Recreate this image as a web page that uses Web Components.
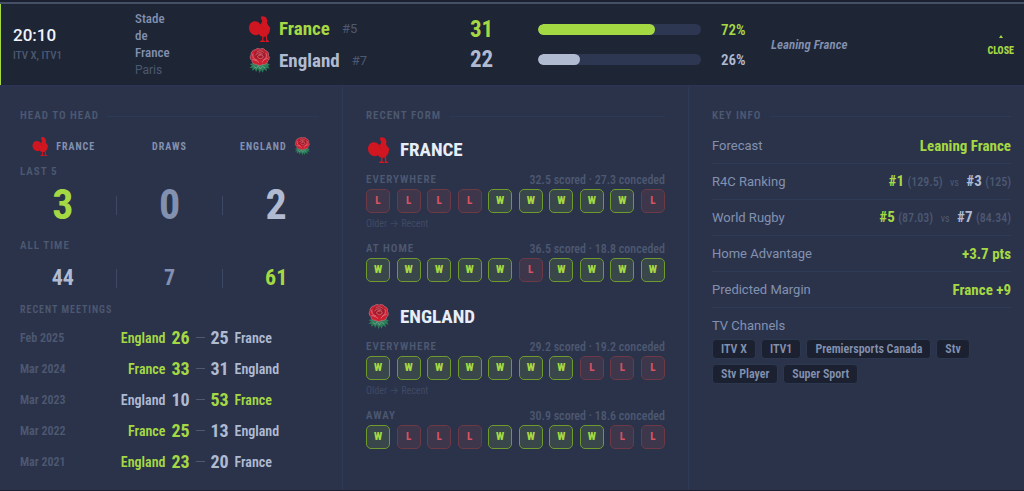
<!DOCTYPE html>
<html lang="en">
<head>
<meta charset="utf-8">
<meta name="viewport" content="width=device-width, initial-scale=1">
<title>France v England</title>
<style>
	:root {
		--cond: "Roboto Condensed", "Liberation Sans Narrow", "Roboto", sans-serif;
		--green: #a5d944;
		--light: #b0bbd2;
		--muted: #8391b0;
		--dim: #4d5971;
		--panel: #2b334b;
		--dark: #1e2535;
		--line: #2d3a55;
	}
	body {
		margin: 0;
		background: var(--panel);
		font-family: "Roboto", sans-serif;
		color: var(--light);
	}
</style>
</head>
<body>
<match-card></match-card>

<script>
const FRANCE = "France";
const ENGLAND = "England";

function define(name, css, html) {
	customElements.define(name, class extends HTMLElement {
		constructor() {
			super();
			this.attachShadow({ mode: "open" });
			this.shadowRoot.innerHTML = `<style>* { box-sizing: border-box; }${css}</style>${typeof html === "function" ? html(this) : html}`;
		}
	});
}

const ROOSTER = `
	<g fill="#d01620">
		<path d="M35 2c4-2 9-2 13 0 4 2 6 6 6 10l3 3-3 2c0 5 2 8 5 12l5 7-2 8c0 5-3 9-6 12l-7 6H40c-5-1-8-4-10-7-5 3-11 3-17 1C5 53 0 45 0 36c0-12 8-20 18-20 7 0 12 3 16 9 5-4 6-9 5-14l-4-1 2-4z"/>
		<path d="M40 58h4l-1 15 5 2v3H33v-3l6-2zM50 57h4l1 15 5 3v3H49l2-6z"/>
	</g>
	<path d="M34 26c1 6 5 10 11 11" fill="none" stroke="#b9121c" stroke-width="1"/>`;

const ROSE = `
	<g fill="#2c7d5a">
		<path d="M11 46 2 48l7 5-8 7 10-1-2 9 9-5 3 9 6-10 5 14 4-11 5 9 4-10 9 6-2-11 10 3-5-9 6-3-9-5z"/>
	</g>
	<path d="M14 54l8 7 6-8 6 10 6-9 8 6" fill="none" stroke="#7fae94" stroke-width="2"/>
	<path d="M19 5c5-5 12-3 15-2 6-3 13-1 16 5 7 1 10 8 8 14 5 6 3 14-2 17-1 8-8 12-15 10-6 5-14 4-18 0-8 1-14-4-14-11-6-4-7-12-3-17-1-8 5-15 13-16z" fill="#ce1f30" stroke="#b9808c" stroke-width="2"/>
	<path d="M20 10c8-7 22-6 28 2 5 7 3 17-5 21-9 5-22 2-26-6-3-6-2-13 3-17z" fill="#a31a2a"/>
	<g fill="none" stroke="#df8792" stroke-width="2">
		<path d="M23 12c7-6 18-4 22 2M19 22c5-8 15-10 22-4M26 25c3-6 12-7 16-1 2 4-2 8-8 8-5 0-8-3-8-7z"/>
		<path d="M12 17c-3 10 3 17 12 19M50 15c5 9 1 17-7 21M10 34c8 3 16 4 20 10M56 31c-7 2-14 5-17 12M33 19v5"/>
	</g>`;

// crest: emblem of the side named in its "team" attribute, sized by --crest
define("team-crest", `
	:host { display: block; flex: none; width: var(--crest, 24px); height: var(--crest, 24px); }
	svg { display: block; width: 100%; height: 100%; }
`, el => `<svg viewBox="0 0 66 78" role="img" aria-label="${el.getAttribute("team")}">${el.getAttribute("team") === FRANCE ? ROOSTER : ROSE}</svg>`);

define("match-time", `
	:host { display: block; }
	time { display: block; font-size: 17px; line-height: 22px; font-weight: 500; color: #f0f4fb; }
	small { display: block; font: 500 11px/20px var(--cond); color: var(--dim); }
`, `<time><slot></slot></time><small><slot name="tv"></slot></small>`);

define("match-venue", `
	:host { display: block; width: 40px; font-size: 12px; line-height: 19px; }
	b { display: block; font: 500 13px/17px var(--cond); color: var(--muted); }
	span { color: var(--dim); }
`, `<b><slot></slot></b><span><slot name="city"></slot></span>`);

define("team-line", `
	:host { --crest: 26px; display: flex; align-items: center; gap: 6px; height: 32px; color: var(--light); }
	:host([win]) { color: var(--green); }
	b { font: 700 19px/24px var(--cond); }
	span { font-size: 13px; color: var(--dim); margin-left: 6px; }
`, el => `<team-crest team="${el.getAttribute("team")}"></team-crest><b>${el.getAttribute("team")}</b><span><slot></slot></span>`);

define("win-chance", `
	:host { display: grid; grid-template-columns: 48px 1fr 26px; gap: 20px; align-items: center; height: 30px; color: var(--light); font-family: var(--cond); }
	:host([win]) { color: var(--green); }
	b { font-size: 23px; font-weight: 700; }
	i { display: block; height: 11px; border-radius: 6px; background: #2e3752; overflow: hidden; }
	i::before { content: ""; display: block; height: 100%; width: var(--value); border-radius: 6px; background: currentColor; }
	span { font-size: 15px; font-weight: 600; }
`, el => `<b><slot></slot></b><i style="--value: ${el.getAttribute("chance")}"></i><span>${el.getAttribute("chance")}</span>`);

define("match-header", `
	:host { display: block; border-top: 2px solid #454f66; background: var(--dark); border-bottom: 2px solid #2c3452; }
	header { display: grid; grid-template-columns: 110px 100px 211px minmax(200px, 277px) 1fr auto; gap: 12px; align-items: center; height: 81px; padding: 0 10px 0 12px; border-left: 1px solid var(--green); }
	em { padding-left: 12px; font: italic 600 13px/18px var(--cond); color: var(--muted); }
	button { display: grid; justify-items: center; border: 0; padding: 4px 0 0; background: none; font: 800 10px/14px var(--cond); color: var(--green); cursor: pointer; }
	svg { display: block; width: 4px; height: 3px; margin-bottom: 6px; fill: currentColor; }
`, `
	<header>
		<match-time>20:10<span slot="tv">ITV X, ITV1</span></match-time>
		<match-venue>Stade de France<span slot="city">Paris</span></match-venue>
		<div>
			<team-line team="France" win>#5</team-line>
			<team-line team="England">#7</team-line>
		</div>
		<div>
			<win-chance chance="72%" win>31</win-chance>
			<win-chance chance="26%">22</win-chance>
		</div>
		<em>Leaning France</em>
		<button type="button"><svg viewBox="0 0 4 3"><path d="M2 0l2 3H0z"/></svg>CLOSE</button>
	</header>`);

define("info-panel", `
	:host { display: block; min-width: 0; }
	h2 { display: flex; align-items: center; gap: 8px; margin: 0 0 4px; font: 600 11px/16px var(--cond); letter-spacing: 1px; color: var(--dim); }
	h2::after { content: ""; flex: 1; height: 1px; background: var(--line); }
`, `<h2><slot name="title"></slot></h2><slot></slot>`);

define("score-split", `
	:host { display: grid; grid-template-columns: 1fr 1px 1fr 1px 1fr; column-gap: 10px; align-items: center; justify-items: center; height: 50px; margin-bottom: 8px; font: 700 42px/48px var(--cond); }
	:host([small]) { height: 48px; margin: 0; font-size: 22px; line-height: 28px; }
	i { width: 1px; height: 19px; background: #3d4964; }
	.draws { color: var(--muted); }
	::slotted([slot]) { color: var(--light); }
	::slotted(.win) { color: var(--green); }
`, `<slot name="home"></slot><i></i><span class="draws"><slot></slot></span><i></i><slot name="away"></slot>`);

const MEETINGS = [
	["Feb 2025", ENGLAND, 26, 25, FRANCE],
	["Mar 2024", FRANCE, 33, 31, ENGLAND],
	["Mar 2023", ENGLAND, 10, 53, FRANCE],
	["Mar 2022", FRANCE, 25, 13, ENGLAND],
	["Mar 2021", ENGLAND, 23, 20, FRANCE],
];

define("recent-meetings", `
	:host { display: block; font-family: var(--cond); margin-top: 4px; }
	ul { list-style: none; margin: 0; padding: 0; }
	li { display: grid; grid-template-columns: 55px 1fr 18px 9px 18px 1fr; column-gap: 6px; align-items: center; height: 31px; font-size: 14px; font-weight: 600; }
	time { font-size: 12px; color: var(--dim); }
	b { font-size: 18px; font-weight: 700; }
	.home { text-align: right; }
	.win { color: var(--green); }
	i { height: 1px; background: var(--dim); }
`, `<ul>${MEETINGS.map(([date, home, a, b, away]) => `
	<li><time>${date}</time><span class="home ${a > b ? "win" : ""}">${home}</span><b class="${a > b ? "win" : ""}">${a}</b><i></i><b class="${b > a ? "win" : ""}">${b}</b><span class="${b > a ? "win" : ""}">${away}</span></li>`).join("")}</ul>`);

define("head-to-head", `
	:host { --crest: 19px; display: block; padding-top: 2px; }
	.teams { display: grid; grid-template-columns: 1fr 1fr 1fr; column-gap: 20px; height: 33px; margin-bottom: 1px; align-items: center; justify-items: center; font: 700 10px/16px var(--cond); letter-spacing: 1px; color: var(--muted); }
	.teams span { display: flex; align-items: center; gap: 6px; }
	h3 { margin: 0; font: 600 11px/16px var(--cond); letter-spacing: 1px; color: var(--dim); }
	.meetings { font-size: 10px; }
`, `
	<div class="teams">
		<span><team-crest team="France"></team-crest>FRANCE</span>
		<span>DRAWS</span>
		<span>ENGLAND<team-crest team="England"></team-crest></span>
	</div>
	<h3>LAST 5</h3>
	<score-split><span slot="home" class="win">3</span>0<span slot="away">2</span></score-split>
	<h3>ALL TIME</h3>
	<score-split small><span slot="home">44</span>7<span slot="away" class="win">61</span></score-split>
	<h3 class="meetings">RECENT MEETINGS</h3>
	<recent-meetings></recent-meetings>`);

// one run of results, oldest first
define("form-run", `
	:host { display: block; height: 69px; font-family: var(--cond); color: var(--dim); }
	header { display: flex; justify-content: space-between; line-height: 18px; font-size: 12px; font-weight: 500; }
	h4 { margin: 0; font-size: 11px; font-weight: 600; letter-spacing: 1px; }
	ol { display: flex; justify-content: space-between; list-style: none; margin: 0; padding: 0; }
	li { width: 24px; height: 24px; border: 1px solid #6d3946; border-radius: 5px; background: #3e364b; color: #d55260; text-align: center; font-size: 11px; line-height: 22px; font-weight: 800; }
	li.W { border-color: #6f9a2e; background: #3a474a; color: var(--green); }
	p { margin: 0; font-size: 10px; line-height: 20px; color: #3f4a63; }
	p span { font-family: "Inter", sans-serif; }
`, el => `
	<header><h4>${el.getAttribute("where")}</h4><span><slot></slot></span></header>
	<ol>${[...el.getAttribute("results")].map(r => `<li class="${r}">${r}</li>`).join("")}</ol>
	${el.hasAttribute("legend") ? "<p>Older <span>→</span> Recent</p>" : ""}`);

define("team-form", `
	:host { --crest: 26px; display: block; height: 167px; padding-top: 6px; }
	h3 { display: flex; align-items: center; gap: 8px; height: 32px; margin: 0 0 5px; font: 700 19px/24px var(--cond); color: #e8eef9; }
`, el => `<h3><team-crest team="${el.getAttribute("team")}"></team-crest>${el.getAttribute("team").toUpperCase()}</h3><slot></slot>`);

define("info-row", `
	:host { display: flex; justify-content: space-between; align-items: center; height: 36px; border-bottom: 1px solid #2f3a55; color: var(--muted); font-size: 13px; }
	.value { font: 700 15px/20px var(--cond); color: var(--green); }
	::slotted(.other) { color: var(--light); }
	::slotted(small) { font-size: 12px; font-weight: 500; color: var(--dim); }
	::slotted(.vs) { margin: 0 4px; font-size: 10px; font-weight: 400; }
`, `<span><slot name="label"></slot></span><span class="value"><slot></slot></span>`);

define("channel-list", `
	:host { display: block; }
	h3 { margin: 8px 0 4px; font-size: 13px; line-height: 19px; font-weight: 400; color: var(--muted); }
	ul { display: flex; flex-wrap: wrap; gap: 5px; list-style: none; margin: 0; padding: 0; }
`, `<h3>TV Channels</h3><ul><slot></slot></ul>`);

define("channel-chip", `
	:host { display: block; padding: 0 8px; border: 1px solid #2c3850; border-radius: 4px; background: #1b2130; font: 600 12px/18px var(--cond); color: var(--muted); }
`, `<slot></slot>`);

define("match-card", `
	:host { display: block; padding-top: 2px; background: linear-gradient(#1b2130 4px, var(--panel) 4px); }
	main { display: flex; gap: 23px; min-height: 404px; padding: 0 13px 0 20px; border-bottom: 1px solid #1b2130; }
	info-panel { flex: 1; padding-top: 21px; }
	hr { flex: none; width: 1px; margin: 0; border: 0; background: #2f3a54; }
`, `
	<match-header></match-header>
	<main>
		<info-panel><span slot="title">HEAD TO HEAD</span><head-to-head></head-to-head></info-panel>
		<hr>
		<info-panel><span slot="title">RECENT FORM</span>
			<team-form team="France">
				<form-run where="EVERYWHERE" results="LLLLWWWWWL" legend>32.5 scored · 27.3 conceded</form-run>
				<form-run where="AT HOME" results="WWWWWLWWWW">36.5 scored · 18.8 conceded</form-run>
			</team-form>
			<team-form team="England">
				<form-run where="EVERYWHERE" results="WWWWWWWLLL" legend>29.2 scored · 19.2 conceded</form-run>
				<form-run where="AWAY" results="WLLLWWWWLL">30.9 scored · 18.6 conceded</form-run>
			</team-form>
		</info-panel>
		<hr>
		<info-panel><span slot="title">KEY INFO</span>
			<info-row><span slot="label">Forecast</span>Leaning France</info-row>
			<info-row><span slot="label">R4C Ranking</span>#1 <small>(129.5)</small> <small class="vs">vs</small> <span class="other">#3</span> <small>(125)</small></info-row>
			<info-row><span slot="label">World Rugby</span>#5 <small>(87.03)</small> <small class="vs">vs</small> <span class="other">#7</span> <small>(84.34)</small></info-row>
			<info-row><span slot="label">Home Advantage</span>+3.7 pts</info-row>
			<info-row><span slot="label">Predicted Margin</span>France +9</info-row>
			<channel-list>
				<channel-chip role="listitem">ITV X</channel-chip>
				<channel-chip role="listitem">ITV1</channel-chip>
				<channel-chip role="listitem">Premiersports Canada</channel-chip>
				<channel-chip role="listitem">Stv</channel-chip>
				<channel-chip role="listitem">Stv Player</channel-chip>
				<channel-chip role="listitem">Super Sport</channel-chip>
			</channel-list>
		</info-panel>
	</main>`);
</script>
</body>
</html>
